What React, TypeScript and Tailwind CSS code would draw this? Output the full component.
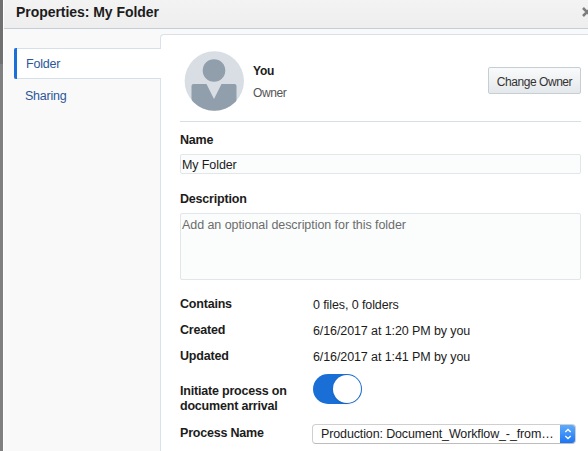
import type { ReactNode } from "react";

function Avatar() {
  return (
    <svg width="60" height="60" viewBox="0 0 60 60" className="shrink-0">
      <defs>
        <clipPath id="disc">
          <circle cx="30.300" cy="30" r="29.700" />
        </clipPath>
      </defs>
      <circle cx="30.300" cy="30" r="29.700" fill="#d8dee4" />
      <g clipPath="url(#disc)">
        <path d="M9.500 33H22.500L30 48L37.500 33H50.500Q52.500 33 52.500 35V60H7.500V35Q7.500 33 9.500 33Z" fill="#919eab" />
      </g>
      <circle cx="30" cy="19.500" r="11.300" fill="#919eab" />
    </svg>
  );
}

function Heading({ children }: { children: ReactNode }) {
  return <div className="h-4 text-[12.5px] leading-4 font-bold tracking-[-0.2px] whitespace-nowrap">{children}</div>;
}

function Row({ label, children }: { label: string; children: ReactNode }) {
  return (
    <div className="flex h-[26px] shrink-0">
      <div className="w-[133px] text-[12.5px] leading-4 font-bold tracking-[-0.2px]">{label}</div>
      <div className="pt-px text-[12.5px] leading-4 tracking-[-0.1px] whitespace-nowrap">{children}</div>
    </div>
  );
}

export default function App() {
  return (
    <div className="flex h-[451px] w-[588px] overflow-hidden bg-white font-['Liberation_Sans',Arial,sans-serif] text-[#1c1c1c]">
      <div className="w-[3px] shrink-0 bg-[#808080]">
        <div className="h-16 bg-[#707070]" />
      </div>
      <div className="flex w-[585px] shrink-0 flex-col border-l border-white bg-[#f9f9f9]">
        <header className="flex h-[29px] shrink-0 items-start justify-between border-b border-[#c4ced7] bg-linear-to-b from-[#f3f3f3] to-[#eeeeee] pl-3">
          <h1 className="pt-1 text-[14px] leading-4 font-bold tracking-[-0.05px] whitespace-nowrap">Properties: My Folder</h1>
          <svg width="6" height="10" viewBox="0 0 6 10" className="mt-[7px]">
            <path d="M1 1L9 9M9 1L1 9" stroke="#7d7d7d" strokeWidth="2.600" />
          </svg>
        </header>
        <div className="flex min-h-0 grow">
          <nav className="z-10 -mr-px w-[157px] shrink-0 pt-[19px] pl-[10px]">
            <div className="h-[31px] border-y border-[#d6e0e9] bg-white">
              <div className="-my-px h-[31px] w-fit rounded-l-xs border-l-[3px] border-[#1a6fd8] pt-2 pl-[9px] text-[12.5px] leading-4 tracking-[-0.2px] text-[#2b579a]">Folder</div>
            </div>
            <div className="pt-[9px] pl-[11px] text-[12.5px] leading-4 tracking-[-0.25px] text-[#2b579a]">Sharing</div>
          </nav>
          <main className="mt-[5px] flex grow flex-col rounded-tl-sm border-t border-l border-[#d9e2ea] bg-white pr-[7px] pl-[19px]">
            <section className="mb-[10px] flex h-[87px] shrink-0 border-b border-[#d5dfe8] pt-4 pl-1">
              <Avatar />
              <div className="grow pt-3 pl-[9px]">
                <div className="text-[12px] leading-4 font-bold tracking-[-0.2px]">You</div>
                <div className="pt-[6px] text-[12px] leading-4 tracking-[-0.4px] text-[#555]">Owner</div>
              </div>
              <button className="mt-4 h-[27px] w-[93px] rounded-xs border border-[#c4ced7] bg-linear-to-b from-[#f9fafb] to-[#e5e8eb] pt-[2px] text-[12px] tracking-[-0.45px] whitespace-nowrap text-[#333]">Change Owner</button>
            </section>
            <Heading>Name</Heading>
            <div className="mt-[6px] h-5 shrink-0 rounded-xs border border-[#e0e6ea] bg-[#fbfdfd] pl-px text-[12.5px] leading-[20px] tracking-[-0.1px]">My Folder</div>
            <div className="h-[17px] shrink-0" />
            <Heading>Description</Heading>
            <div className="mt-[6px] mb-4 h-[67px] shrink-0 rounded-xs border border-[#e0e6ea] bg-[#fbfdfd] pt-[3px] pl-px text-[12.5px] leading-4 tracking-[-0.06px] text-[#6c6c6c]">Add an optional description for this folder</div>
            <Row label="Contains">0 files, 0 folders</Row>
            <Row label="Created">6/16/2017 at 1:20 PM by you</Row>
            <Row label="Updated">6/16/2017 at 1:41 PM by you</Row>
            <div className="flex h-[50px] shrink-0">
              <div className="w-[133px] pt-[10px] text-[12.5px] leading-[15px] font-bold tracking-[-0.2px] whitespace-nowrap">
                Initiate process on
                <br />
                document arrival
              </div>
              <div className="flex h-[30px] w-[49px] justify-end rounded-full bg-[#196fd6] p-px">
                <div className="size-7 rounded-full bg-white shadow-sm" />
              </div>
            </div>
            <div className="flex shrink-0">
              <div className="w-[132px] pt-px text-[12.5px] leading-4 font-bold tracking-[-0.2px]">Process Name</div>
              <div className="flex h-5 w-[264px] overflow-hidden rounded-[4px] border border-[#cfcfcf] border-b-[#bcbcbc] bg-white">
                <div className="grow pl-2 text-[12.5px] leading-[18px] tracking-[-0.13px] whitespace-nowrap">Production: Document_Workflow_-_from…</div>
                <div className="-my-px -mr-px flex w-4 shrink-0 items-center justify-center bg-linear-to-b from-[#63aefb] to-[#1571f5]">
                  <svg width="8" height="12" viewBox="0 0 8 12" fill="none" stroke="white" strokeWidth="1.300">
                    <path d="M1.300 4L4 1.500L6.700 4M1.300 8L4 10.500L6.700 8" />
                  </svg>
                </div>
              </div>
            </div>
          </main>
        </div>
      </div>
    </div>
  );
}
